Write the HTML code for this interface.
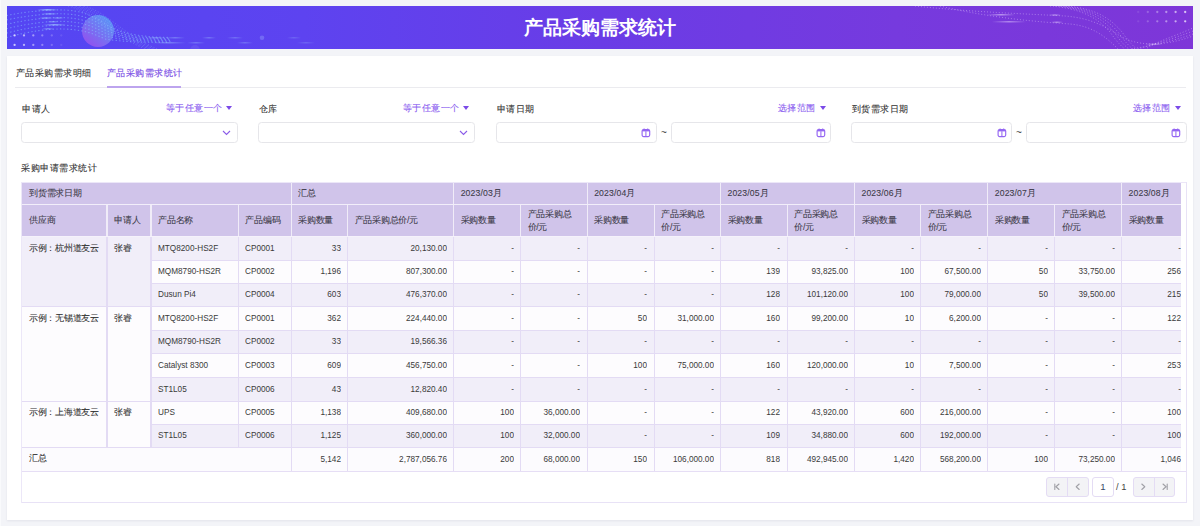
<!DOCTYPE html>
<html><head><meta charset="utf-8"><style>
*{box-sizing:border-box}
html,body{margin:0;padding:0}
body{width:1200px;height:526px;background:#f3f4f8;position:relative;overflow:hidden;font-family:"Liberation Sans", sans-serif;color:#333}
.t{position:absolute;height:20px;line-height:20px;white-space:nowrap;font-size:8.67px;letter-spacing:-0.3px;color:#333;-webkit-text-stroke:0.08px #333}
.th{position:absolute;height:20px;line-height:20px;white-space:nowrap;font-size:8.67px;letter-spacing:-0.25px;color:#3c3a48;-webkit-text-stroke:0.08px #3c3a48}
.n{position:absolute;height:20px;line-height:20px;white-space:nowrap;font-size:9.4px;color:#3a3a3a;transform:scaleX(0.875);transform-origin:left center}
.n.r{transform-origin:right center}
.l{position:absolute;height:20px;line-height:20px;white-space:nowrap;font-size:9.33px;letter-spacing:0.5px;color:#333;-webkit-text-stroke:0.1px #333}
.p{position:absolute;height:20px;line-height:20px;white-space:nowrap;font-size:9.33px;letter-spacing:0.5px;color:#8b5cf0;-webkit-text-stroke:0.1px #8b5cf0}
</style></head><body>
<div style="position:absolute;left:0.00px;top:0.00px;width:1.20px;height:526.00px;background:#f9fafc;"></div>
<div style="position:absolute;left:7px;top:6px;width:1186px;height:43px;background:linear-gradient(90deg,#5446f3 0%,#5d43f0 25%,#6a3ce6 50%,#763ade 75%,#7e36d8 100%);overflow:hidden">
<svg style="position:absolute;left:0;top:0" width="1186" height="43" viewBox="0 0 1186 43"><defs><linearGradient id="stk" x1="0" y1="0" x2="1" y2="0"><stop offset="0" stop-color="#a8d6ff" stop-opacity="0"/><stop offset="0.5" stop-color="#a8d6ff" stop-opacity="1"/><stop offset="1" stop-color="#a8d6ff" stop-opacity="0"/></linearGradient><linearGradient id="stk2" x1="0" y1="0" x2="1" y2="0"><stop offset="0" stop-color="#ead8ff" stop-opacity="0"/><stop offset="0.5" stop-color="#ead8ff" stop-opacity="1"/><stop offset="1" stop-color="#ead8ff" stop-opacity="0"/></linearGradient><linearGradient id="sph" x1="0.85" y1="0.1" x2="0.2" y2="0.9"><stop offset="0" stop-color="#5aaaf6"/><stop offset="1" stop-color="#a058ee"/></linearGradient></defs><g transform="translate(-7,-6)"><circle cx="98" cy="31" r="16" fill="url(#sph)" opacity="0.78"/><path d="M7 15.4 C 30 11, 50 9.5, 64 10.0 C 80 10.5, 92 15.0, 105 24 C 118 32.0, 135 37.0, 170 37.5" fill="none" stroke="#8cc6ff" stroke-opacity="0.5" stroke-width="1.2" stroke-linecap="round" stroke-dasharray="0.4 3.2"/><path d="M7 19.8 C 30 15, 50 13.3, 64 13.8 C 80 14.3, 92 18.5, 105 27 C 118 33.8, 135 38.1, 170 38.5" fill="none" stroke="#8cc6ff" stroke-opacity="0.5" stroke-width="1.2" stroke-linecap="round" stroke-dasharray="0.4 3.2"/><path d="M7 24.200000000000003 C 30 19, 50 17.1, 64 17.6 C 80 18.1, 92 22.0, 105 30 C 118 35.6, 135 39.2, 170 39.5" fill="none" stroke="#8cc6ff" stroke-opacity="0.5" stroke-width="1.2" stroke-linecap="round" stroke-dasharray="0.4 3.2"/><path d="M7 28.6 C 30 23, 50 20.9, 64 21.4 C 80 21.9, 92 25.5, 105 33 C 118 37.4, 135 40.3, 170 40.5" fill="none" stroke="#8cc6ff" stroke-opacity="0.5" stroke-width="1.2" stroke-linecap="round" stroke-dasharray="0.4 3.2"/><path d="M7 33.0 C 30 27, 50 24.7, 64 25.2 C 80 25.7, 92 29.0, 105 36 C 118 39.2, 135 41.4, 170 41.5" fill="none" stroke="#8cc6ff" stroke-opacity="0.5" stroke-width="1.2" stroke-linecap="round" stroke-dasharray="0.4 3.2"/><path d="M7 37.4 C 30 31, 50 28.5, 64 29.0 C 80 29.5, 92 32.5, 105 39 C 118 41.0, 135 42.5, 170 42.5" fill="none" stroke="#8cc6ff" stroke-opacity="0.5" stroke-width="1.2" stroke-linecap="round" stroke-dasharray="0.4 3.2"/><path d="M68 6 C 84 10, 100 22, 118 34 C 130 42, 140 47, 150 51" fill="none" stroke="#9cd0ff" stroke-opacity="0.4" stroke-width="0.8" stroke-dasharray="1 2"/><path d="M72 6 C 88 10, 103 22, 121 34 C 133 42, 143 47, 153 51" fill="none" stroke="#9cd0ff" stroke-opacity="0.4" stroke-width="0.8" stroke-dasharray="1 2"/><path d="M76 6 C 92 10, 106 22, 124 34 C 136 42, 146 47, 156 51" fill="none" stroke="#9cd0ff" stroke-opacity="0.4" stroke-width="0.8" stroke-dasharray="1 2"/><path d="M80 6 C 96 10, 109 22, 127 34 C 139 42, 149 47, 159 51" fill="none" stroke="#9cd0ff" stroke-opacity="0.4" stroke-width="0.8" stroke-dasharray="1 2"/><path d="M84 6 C 100 10, 112 22, 130 34 C 142 42, 152 47, 162 51" fill="none" stroke="#9cd0ff" stroke-opacity="0.4" stroke-width="0.8" stroke-dasharray="1 2"/><rect x="37" y="9.100000000000001" width="21" height="1.4" rx="0.7" fill="url(#stk)" opacity="0.72"/><rect x="41" y="13.200000000000001" width="17" height="1.4" rx="0.7" fill="url(#stk)" opacity="0.64"/><rect x="39" y="17.3" width="14" height="1.4" rx="0.7" fill="url(#stk)" opacity="0.56"/><rect x="52" y="17.3" width="12" height="1.4" rx="0.7" fill="url(#stk)" opacity="0.48"/><rect x="47" y="21.0" width="12" height="1.4" rx="0.7" fill="url(#stk)" opacity="0.48"/><rect x="43" y="24.1" width="23" height="1.4" rx="0.7" fill="url(#stk)" opacity="0.64"/><rect x="42" y="28.0" width="12" height="1.4" rx="0.7" fill="url(#stk)" opacity="0.48"/><rect x="147" y="37.0" width="18" height="1.4" rx="0.7" fill="url(#stk)" opacity="0.35"/><rect x="165" y="37.0" width="20" height="1.4" rx="0.7" fill="url(#stk)" opacity="0.35"/><rect x="152" y="42.0" width="34" height="1.4" rx="0.7" fill="url(#stk)" opacity="0.40"/><rect x="187" y="42.0" width="18" height="1.4" rx="0.7" fill="url(#stk)" opacity="0.32"/><rect x="202" y="37.0" width="14" height="1.4" rx="0.7" fill="url(#stk)" opacity="0.32"/><rect x="227" y="37.0" width="16" height="1.4" rx="0.7" fill="url(#stk)" opacity="0.29"/><rect x="237" y="42.0" width="16" height="1.4" rx="0.7" fill="url(#stk)" opacity="0.29"/><rect x="287" y="37.0" width="14" height="1.4" rx="0.7" fill="url(#stk)" opacity="0.22"/><rect x="297" y="42.0" width="18" height="1.4" rx="0.7" fill="url(#stk)" opacity="0.22"/><circle cx="262" cy="37.7" r="2.3" fill="#b8dcff" opacity="0.25"/><circle cx="195" cy="50" r="5" fill="#ffffff" opacity="0.07"/><circle cx="14.6" cy="35.4" r="1.15" fill="#fff" opacity="0.70"/><circle cx="24" cy="35.4" r="1.15" fill="#fff" opacity="0.58"/><circle cx="33.3" cy="35.4" r="1.15" fill="#fff" opacity="0.46"/><circle cx="42.3" cy="35.4" r="1.15" fill="#fff" opacity="0.34"/><circle cx="51.8" cy="35.4" r="1.15" fill="#fff" opacity="0.22"/><circle cx="61.3" cy="35.4" r="1.15" fill="#fff" opacity="0.10"/><circle cx="14.6" cy="44.9" r="1.15" fill="#fff" opacity="0.70"/><circle cx="24" cy="44.9" r="1.15" fill="#fff" opacity="0.58"/><circle cx="33.3" cy="44.9" r="1.15" fill="#fff" opacity="0.46"/><circle cx="42.3" cy="44.9" r="1.15" fill="#fff" opacity="0.34"/><circle cx="51.8" cy="44.9" r="1.15" fill="#fff" opacity="0.22"/><circle cx="61.3" cy="44.9" r="1.15" fill="#fff" opacity="0.10"/><circle cx="1138.2" cy="12" r="1.15" fill="#fff" opacity="0.10"/><circle cx="1147.8" cy="12" r="1.15" fill="#fff" opacity="0.22"/><circle cx="1157.3" cy="12" r="1.15" fill="#fff" opacity="0.34"/><circle cx="1166.3" cy="12" r="1.15" fill="#fff" opacity="0.46"/><circle cx="1175.6" cy="12" r="1.15" fill="#fff" opacity="0.58"/><circle cx="1185.2" cy="12" r="1.15" fill="#fff" opacity="0.70"/><circle cx="1138.2" cy="21.3" r="1.15" fill="#fff" opacity="0.10"/><circle cx="1147.8" cy="21.3" r="1.15" fill="#fff" opacity="0.22"/><circle cx="1157.3" cy="21.3" r="1.15" fill="#fff" opacity="0.34"/><circle cx="1166.3" cy="21.3" r="1.15" fill="#fff" opacity="0.46"/><circle cx="1175.6" cy="21.3" r="1.15" fill="#fff" opacity="0.58"/><circle cx="1185.2" cy="21.3" r="1.15" fill="#fff" opacity="0.70"/><path d="M915 6 C 970 12, 1030 14, 1065 16 C 1090 18, 1105 26, 1120 36 C 1135 45, 1160 48, 1193 36" fill="none" stroke="#ead8ff" stroke-opacity="0.5" stroke-width="0.8" stroke-dasharray="1 2"/><path d="M940 6 C 990 18, 1040 22, 1070 24 C 1092 26, 1105 36, 1118 49" fill="none" stroke="#ead8ff" stroke-opacity="0.5" stroke-width="0.8" stroke-dasharray="1 2"/><path d="M1050 6 C 1080 8, 1098 18, 1110 32 C 1117 42, 1122 47, 1126 50" fill="none" stroke="#ead8ff" stroke-opacity="0.5" stroke-width="0.8" stroke-dasharray="1 2"/><path d="M1055 6 C 1085 8, 1102 18, 1114 32 C 1121 42, 1126 47, 1130 50" fill="none" stroke="#ead8ff" stroke-opacity="0.5" stroke-width="0.8" stroke-dasharray="1 2"/><path d="M1060 6 C 1090 8, 1106 18, 1118 32 C 1125 42, 1130 47, 1134 50" fill="none" stroke="#ead8ff" stroke-opacity="0.5" stroke-width="0.8" stroke-dasharray="1 2"/><path d="M1065 6 C 1095 8, 1110 18, 1122 32 C 1129 42, 1134 47, 1138 50" fill="none" stroke="#ead8ff" stroke-opacity="0.5" stroke-width="0.8" stroke-dasharray="1 2"/><path d="M1125 50 C 1150 46, 1170 42, 1193 34" fill="none" stroke="#ead8ff" stroke-opacity="0.5" stroke-width="0.8" stroke-dasharray="1 2"/><path d="M1135 50 C 1150 45, 1170 40, 1193 31" fill="none" stroke="#ead8ff" stroke-opacity="0.5" stroke-width="0.8" stroke-dasharray="1 2"/><path d="M1145 50 C 1150 44, 1170 38, 1193 28" fill="none" stroke="#ead8ff" stroke-opacity="0.5" stroke-width="0.8" stroke-dasharray="1 2"/><rect x="987" y="14.0" width="28" height="1.4" rx="0.7" fill="url(#stk2)" opacity="0.56"/><rect x="992" y="21.0" width="34" height="1.4" rx="0.7" fill="url(#stk2)" opacity="0.48"/><rect x="1049" y="14.3" width="12" height="1.4" rx="0.7" fill="url(#stk2)" opacity="0.48"/><rect x="1051" y="21.6" width="12" height="1.4" rx="0.7" fill="url(#stk2)" opacity="0.48"/><rect x="1145" y="43.599999999999994" width="18" height="1.4" rx="0.7" fill="url(#stk2)" opacity="0.40"/></g></svg>
<div style="position:absolute;left:0;top:0;width:1186px;height:43px;text-align:center;line-height:43px;font-size:18.67px;font-weight:bold;color:#fff;letter-spacing:0px">产品采购需求统计</div>
</div>
<div style="position:absolute;left:7.00px;top:56.00px;width:1186.00px;height:464.00px;background:#fff;box-shadow:0 0.5px 2px rgba(40,40,80,0.08)"></div>
<div class="l" style="left:15.80px;top:62.50px">产品采购需求明细</div>
<div class="p" style="left:106.7px;top:62.5px;color:#7c4fe6;-webkit-text-stroke:0.15px #7c4fe6">产品采购需求统计</div>
<div style="position:absolute;left:15.00px;top:87.00px;width:1171.00px;height:1.00px;background:#ebebef;"></div>
<div style="position:absolute;left:107.00px;top:86.10px;width:74.00px;height:1.80px;background:#bda4ee;"></div>
<div class="l" style="left:22.00px;top:98.50px">申请人</div>
<div class="l" style="left:258.50px;top:98.50px">仓库</div>
<div class="l" style="left:496.50px;top:98.50px">申请日期</div>
<div class="l" style="left:851.50px;top:98.50px">到货需求日期</div>
<div class="p r" style="left:22.50px;top:97.60px;width:200px;text-align:right">等于任意一个</div>
<div class="p r" style="left:259.50px;top:97.60px;width:200px;text-align:right">等于任意一个</div>
<div class="p r" style="left:615.50px;top:97.60px;width:200px;text-align:right">选择范围</div>
<div class="p r" style="left:970.60px;top:97.60px;width:200px;text-align:right">选择范围</div>
<div style="position:absolute;left:226px;top:106px;width:0;height:0;border-left:3.5px solid transparent;border-right:3.5px solid transparent;border-top:4.5px solid #7b4ae8"></div>
<div style="position:absolute;left:463px;top:106px;width:0;height:0;border-left:3.5px solid transparent;border-right:3.5px solid transparent;border-top:4.5px solid #7b4ae8"></div>
<div style="position:absolute;left:819.5px;top:106px;width:0;height:0;border-left:3.5px solid transparent;border-right:3.5px solid transparent;border-top:4.5px solid #7b4ae8"></div>
<div style="position:absolute;left:1174.5px;top:106px;width:0;height:0;border-left:3.5px solid transparent;border-right:3.5px solid transparent;border-top:4.5px solid #7b4ae8"></div>
<div style="position:absolute;left:21px;top:122px;width:217px;height:20.7px;border:1px solid #e6e6ea;border-radius:3.5px;background:#fff"></div>
<svg style="position:absolute;left:222px;top:129.6px" width="9" height="6" viewBox="0 0 9 6"><path d="M1 1 L4.5 4.5 L8 1" fill="none" stroke="#8b5ce8" stroke-width="1.1"/></svg>
<div style="position:absolute;left:258px;top:122px;width:217px;height:20.7px;border:1px solid #e6e6ea;border-radius:3.5px;background:#fff"></div>
<svg style="position:absolute;left:459px;top:129.6px" width="9" height="6" viewBox="0 0 9 6"><path d="M1 1 L4.5 4.5 L8 1" fill="none" stroke="#8b5ce8" stroke-width="1.1"/></svg>
<div style="position:absolute;left:496px;top:122px;width:161px;height:20.7px;border:1px solid #e6e6ea;border-radius:3.5px;background:#fff"></div>
<svg style="position:absolute;left:641.4px;top:127.6px" width="10" height="10" viewBox="0 0 10 10"><rect x="1.1" y="1.6" width="7.6" height="7" rx="1.5" fill="none" stroke="#9466f2" stroke-width="1.15"/><rect x="1.3" y="2" width="7.2" height="1.4" fill="#9466f2"/><path d="M4.9 3.3 V8.6 M3.1 0.5 V2.2 M6.7 0.5 V2.2" stroke="#9466f2" stroke-width="1.05"/></svg>
<div style="position:absolute;left:671px;top:122px;width:160px;height:20.7px;border:1px solid #e6e6ea;border-radius:3.5px;background:#fff"></div>
<svg style="position:absolute;left:815.5px;top:127.6px" width="10" height="10" viewBox="0 0 10 10"><rect x="1.1" y="1.6" width="7.6" height="7" rx="1.5" fill="none" stroke="#9466f2" stroke-width="1.15"/><rect x="1.3" y="2" width="7.2" height="1.4" fill="#9466f2"/><path d="M4.9 3.3 V8.6 M3.1 0.5 V2.2 M6.7 0.5 V2.2" stroke="#9466f2" stroke-width="1.05"/></svg>
<div style="position:absolute;left:851px;top:122px;width:160.5px;height:20.7px;border:1px solid #e6e6ea;border-radius:3.5px;background:#fff"></div>
<svg style="position:absolute;left:996.5px;top:127.6px" width="10" height="10" viewBox="0 0 10 10"><rect x="1.1" y="1.6" width="7.6" height="7" rx="1.5" fill="none" stroke="#9466f2" stroke-width="1.15"/><rect x="1.3" y="2" width="7.2" height="1.4" fill="#9466f2"/><path d="M4.9 3.3 V8.6 M3.1 0.5 V2.2 M6.7 0.5 V2.2" stroke="#9466f2" stroke-width="1.05"/></svg>
<div style="position:absolute;left:1026px;top:122px;width:160.5px;height:20.7px;border:1px solid #e6e6ea;border-radius:3.5px;background:#fff"></div>
<svg style="position:absolute;left:1171px;top:127.6px" width="10" height="10" viewBox="0 0 10 10"><rect x="1.1" y="1.6" width="7.6" height="7" rx="1.5" fill="none" stroke="#9466f2" stroke-width="1.15"/><rect x="1.3" y="2" width="7.2" height="1.4" fill="#9466f2"/><path d="M4.9 3.3 V8.6 M3.1 0.5 V2.2 M6.7 0.5 V2.2" stroke="#9466f2" stroke-width="1.05"/></svg>
<div class="l" style="left:661px;top:122.5px;font-size:10px;color:#444;-webkit-text-stroke:0">~</div>
<div class="l" style="left:1016px;top:122.5px;font-size:10px;color:#444;-webkit-text-stroke:0">~</div>
<div class="l" style="left:21.00px;top:158.00px">采购申请需求统计</div>
<div style="position:absolute;left:22.00px;top:183.00px;width:1159.00px;height:53.00px;background:#d0c4ea;"></div>
<div style="position:absolute;left:22.00px;top:204.00px;width:1159.00px;height:1.00px;background:#f2eefa;"></div>
<div style="position:absolute;left:22.00px;top:236.00px;width:1159.00px;height:1.00px;background:#f5f2fb;"></div>
<div style="position:absolute;left:290.60px;top:183.00px;width:1.20px;height:21.00px;background:#f0ecf8;"></div>
<div style="position:absolute;left:453.10px;top:183.00px;width:1.20px;height:21.00px;background:#f0ecf8;"></div>
<div style="position:absolute;left:586.60px;top:183.00px;width:1.20px;height:21.00px;background:#f0ecf8;"></div>
<div style="position:absolute;left:719.90px;top:183.00px;width:1.20px;height:21.00px;background:#f0ecf8;"></div>
<div style="position:absolute;left:853.90px;top:183.00px;width:1.20px;height:21.00px;background:#f0ecf8;"></div>
<div style="position:absolute;left:987.20px;top:183.00px;width:1.20px;height:21.00px;background:#f0ecf8;"></div>
<div style="position:absolute;left:1121.00px;top:183.00px;width:1.20px;height:21.00px;background:#f0ecf8;"></div>
<div style="position:absolute;left:106.40px;top:205.00px;width:1.20px;height:31.00px;background:#f0ecf8;"></div>
<div style="position:absolute;left:150.40px;top:205.00px;width:1.20px;height:31.00px;background:#f0ecf8;"></div>
<div style="position:absolute;left:237.70px;top:205.00px;width:1.20px;height:31.00px;background:#f0ecf8;"></div>
<div style="position:absolute;left:290.60px;top:205.00px;width:1.20px;height:31.00px;background:#f0ecf8;"></div>
<div style="position:absolute;left:346.90px;top:205.00px;width:1.20px;height:31.00px;background:#f0ecf8;"></div>
<div style="position:absolute;left:453.10px;top:205.00px;width:1.20px;height:31.00px;background:#f0ecf8;"></div>
<div style="position:absolute;left:519.90px;top:205.00px;width:1.20px;height:31.00px;background:#f0ecf8;"></div>
<div style="position:absolute;left:586.60px;top:205.00px;width:1.20px;height:31.00px;background:#f0ecf8;"></div>
<div style="position:absolute;left:653.60px;top:205.00px;width:1.20px;height:31.00px;background:#f0ecf8;"></div>
<div style="position:absolute;left:719.90px;top:205.00px;width:1.20px;height:31.00px;background:#f0ecf8;"></div>
<div style="position:absolute;left:786.60px;top:205.00px;width:1.20px;height:31.00px;background:#f0ecf8;"></div>
<div style="position:absolute;left:853.90px;top:205.00px;width:1.20px;height:31.00px;background:#f0ecf8;"></div>
<div style="position:absolute;left:919.90px;top:205.00px;width:1.20px;height:31.00px;background:#f0ecf8;"></div>
<div style="position:absolute;left:987.20px;top:205.00px;width:1.20px;height:31.00px;background:#f0ecf8;"></div>
<div style="position:absolute;left:1054.00px;top:205.00px;width:1.20px;height:31.00px;background:#f0ecf8;"></div>
<div style="position:absolute;left:1121.00px;top:205.00px;width:1.20px;height:31.00px;background:#f0ecf8;"></div>
<div class="th" style="left:29.00px;top:183.00px">到货需求日期</div>
<div class="th" style="left:298.00px;top:183.00px">汇总</div>
<div class="th" style="left:460.70px;top:183.00px;letter-spacing:0.12px">2023/03月</div>
<div class="th" style="left:594.20px;top:183.00px;letter-spacing:0.12px">2023/04月</div>
<div class="th" style="left:727.50px;top:183.00px;letter-spacing:0.12px">2023/05月</div>
<div class="th" style="left:861.50px;top:183.00px;letter-spacing:0.12px">2023/06月</div>
<div class="th" style="left:994.80px;top:183.00px;letter-spacing:0.12px">2023/07月</div>
<div class="th" style="left:1128.60px;top:183.00px;letter-spacing:0.12px">2023/08月</div>
<div class="th" style="left:29.00px;top:210.00px">供应商</div>
<div class="th" style="left:114.00px;top:210.00px">申请人</div>
<div class="th" style="left:158.00px;top:210.00px">产品名称</div>
<div class="th" style="left:245.30px;top:210.00px">产品编码</div>
<div class="th" style="left:298.20px;top:210.00px">采购数量</div>
<div class="th" style="left:354.50px;top:210.00px">产品采购总价/元</div>
<div class="th" style="left:460.70px;top:210.00px">采购数量</div>
<div class="th" style="left:527.50px;top:203.50px">产品采购总</div>
<div class="th" style="left:527.50px;top:216.50px">价/元</div>
<div class="th" style="left:594.20px;top:210.00px">采购数量</div>
<div class="th" style="left:661.20px;top:203.50px">产品采购总</div>
<div class="th" style="left:661.20px;top:216.50px">价/元</div>
<div class="th" style="left:727.50px;top:210.00px">采购数量</div>
<div class="th" style="left:794.20px;top:203.50px">产品采购总</div>
<div class="th" style="left:794.20px;top:216.50px">价/元</div>
<div class="th" style="left:861.50px;top:210.00px">采购数量</div>
<div class="th" style="left:927.50px;top:203.50px">产品采购总</div>
<div class="th" style="left:927.50px;top:216.50px">价/元</div>
<div class="th" style="left:994.80px;top:210.00px">采购数量</div>
<div class="th" style="left:1061.60px;top:203.50px">产品采购总</div>
<div class="th" style="left:1061.60px;top:216.50px">价/元</div>
<div class="th" style="left:1128.60px;top:210.00px">采购数量</div>
<div style="position:absolute;left:22.00px;top:237.00px;width:1159.00px;height:23.00px;background:#f1eef9;"></div>
<div style="position:absolute;left:22.00px;top:261.00px;width:1159.00px;height:22.00px;background:#fdfcfe;"></div>
<div style="position:absolute;left:22.00px;top:284.00px;width:1159.00px;height:22.00px;background:#f1eef9;"></div>
<div style="position:absolute;left:22.00px;top:307.00px;width:1159.00px;height:23.00px;background:#fdfcfe;"></div>
<div style="position:absolute;left:22.00px;top:331.00px;width:1159.00px;height:22.00px;background:#f1eef9;"></div>
<div style="position:absolute;left:22.00px;top:354.00px;width:1159.00px;height:23.00px;background:#fdfcfe;"></div>
<div style="position:absolute;left:22.00px;top:378.00px;width:1159.00px;height:23.00px;background:#f1eef9;"></div>
<div style="position:absolute;left:22.00px;top:402.00px;width:1159.00px;height:22.00px;background:#fdfcfe;"></div>
<div style="position:absolute;left:22.00px;top:425.00px;width:1159.00px;height:22.00px;background:#f1eef9;"></div>
<div style="position:absolute;left:22.00px;top:448.00px;width:1159.00px;height:23.00px;background:#fcfbfe;"></div>
<div style="position:absolute;left:22.00px;top:237.00px;width:129.00px;height:69.00px;background:#f1eef9;"></div>
<div class="t" style="left:29.00px;top:237.70px">示例：杭州道友云</div>
<div class="t" style="left:114.00px;top:237.70px">张睿</div>
<div style="position:absolute;left:22.00px;top:307.00px;width:129.00px;height:94.00px;background:#fdfcfe;"></div>
<div class="t" style="left:29.00px;top:307.70px">示例：无锡道友云</div>
<div class="t" style="left:114.00px;top:307.70px">张睿</div>
<div style="position:absolute;left:22.00px;top:402.00px;width:129.00px;height:45.00px;background:#fdfcfe;"></div>
<div class="t" style="left:29.00px;top:402.20px">示例：上海道友云</div>
<div class="t" style="left:114.00px;top:402.20px">张睿</div>
<div style="position:absolute;left:151.00px;top:260.00px;width:1030.00px;height:1.00px;background:#e3dbf4;"></div>
<div style="position:absolute;left:151.00px;top:283.00px;width:1030.00px;height:1.00px;background:#e3dbf4;"></div>
<div style="position:absolute;left:22.00px;top:306.00px;width:1159.00px;height:1.00px;background:#e3dbf4;"></div>
<div style="position:absolute;left:151.00px;top:330.00px;width:1030.00px;height:1.00px;background:#e3dbf4;"></div>
<div style="position:absolute;left:151.00px;top:353.00px;width:1030.00px;height:1.00px;background:#e3dbf4;"></div>
<div style="position:absolute;left:151.00px;top:377.00px;width:1030.00px;height:1.00px;background:#e3dbf4;"></div>
<div style="position:absolute;left:22.00px;top:401.00px;width:1159.00px;height:1.00px;background:#e3dbf4;"></div>
<div style="position:absolute;left:151.00px;top:424.00px;width:1030.00px;height:1.00px;background:#e3dbf4;"></div>
<div style="position:absolute;left:22.00px;top:447.00px;width:1159.00px;height:1.00px;background:#e3dbf4;"></div>
<div style="position:absolute;left:22.00px;top:471.00px;width:1164.00px;height:1.00px;background:#e6def5;"></div>
<div style="position:absolute;left:106.40px;top:237.00px;width:1.20px;height:210.00px;background:#e3dbf4;"></div>
<div style="position:absolute;left:150.40px;top:237.00px;width:1.20px;height:210.00px;background:#e3dbf4;"></div>
<div style="position:absolute;left:237.70px;top:237.00px;width:1.20px;height:210.00px;background:#e3dbf4;"></div>
<div style="position:absolute;left:290.60px;top:237.00px;width:1.20px;height:234.00px;background:#e3dbf4;"></div>
<div style="position:absolute;left:346.90px;top:237.00px;width:1.20px;height:234.00px;background:#e3dbf4;"></div>
<div style="position:absolute;left:453.10px;top:237.00px;width:1.20px;height:234.00px;background:#e3dbf4;"></div>
<div style="position:absolute;left:519.90px;top:237.00px;width:1.20px;height:234.00px;background:#e3dbf4;"></div>
<div style="position:absolute;left:586.60px;top:237.00px;width:1.20px;height:234.00px;background:#e3dbf4;"></div>
<div style="position:absolute;left:653.60px;top:237.00px;width:1.20px;height:234.00px;background:#e3dbf4;"></div>
<div style="position:absolute;left:719.90px;top:237.00px;width:1.20px;height:234.00px;background:#e3dbf4;"></div>
<div style="position:absolute;left:786.60px;top:237.00px;width:1.20px;height:234.00px;background:#e3dbf4;"></div>
<div style="position:absolute;left:853.90px;top:237.00px;width:1.20px;height:234.00px;background:#e3dbf4;"></div>
<div style="position:absolute;left:919.90px;top:237.00px;width:1.20px;height:234.00px;background:#e3dbf4;"></div>
<div style="position:absolute;left:987.20px;top:237.00px;width:1.20px;height:234.00px;background:#e3dbf4;"></div>
<div style="position:absolute;left:1054.00px;top:237.00px;width:1.20px;height:234.00px;background:#e3dbf4;"></div>
<div style="position:absolute;left:1121.00px;top:237.00px;width:1.20px;height:234.00px;background:#e3dbf4;"></div>
<div class="n" style="left:158.00px;top:237.50px">MTQ8200-HS2F</div>
<div class="n" style="left:245.30px;top:237.50px">CP0001</div>
<div class="n r" style="left:140.50px;top:237.50px;width:200px;text-align:right">33</div>
<div class="n r" style="left:246.70px;top:237.50px;width:200px;text-align:right">20,130.00</div>
<div class="n r" style="left:313.50px;top:237.50px;width:200px;text-align:right">-</div>
<div class="n r" style="left:380.20px;top:237.50px;width:200px;text-align:right">-</div>
<div class="n r" style="left:447.20px;top:237.50px;width:200px;text-align:right">-</div>
<div class="n r" style="left:513.50px;top:237.50px;width:200px;text-align:right">-</div>
<div class="n r" style="left:580.20px;top:237.50px;width:200px;text-align:right">-</div>
<div class="n r" style="left:647.50px;top:237.50px;width:200px;text-align:right">-</div>
<div class="n r" style="left:713.50px;top:237.50px;width:200px;text-align:right">-</div>
<div class="n r" style="left:780.80px;top:237.50px;width:200px;text-align:right">-</div>
<div class="n r" style="left:847.60px;top:237.50px;width:200px;text-align:right">-</div>
<div class="n r" style="left:914.60px;top:237.50px;width:200px;text-align:right">-</div>
<div class="n r" style="left:981.40px;top:237.50px;width:200px;text-align:right">-</div>
<div class="n" style="left:158.00px;top:261.00px">MQM8790-HS2R</div>
<div class="n" style="left:245.30px;top:261.00px">CP0002</div>
<div class="n r" style="left:140.50px;top:261.00px;width:200px;text-align:right">1,196</div>
<div class="n r" style="left:246.70px;top:261.00px;width:200px;text-align:right">807,300.00</div>
<div class="n r" style="left:313.50px;top:261.00px;width:200px;text-align:right">-</div>
<div class="n r" style="left:380.20px;top:261.00px;width:200px;text-align:right">-</div>
<div class="n r" style="left:447.20px;top:261.00px;width:200px;text-align:right">-</div>
<div class="n r" style="left:513.50px;top:261.00px;width:200px;text-align:right">-</div>
<div class="n r" style="left:580.20px;top:261.00px;width:200px;text-align:right">139</div>
<div class="n r" style="left:647.50px;top:261.00px;width:200px;text-align:right">93,825.00</div>
<div class="n r" style="left:713.50px;top:261.00px;width:200px;text-align:right">100</div>
<div class="n r" style="left:780.80px;top:261.00px;width:200px;text-align:right">67,500.00</div>
<div class="n r" style="left:847.60px;top:261.00px;width:200px;text-align:right">50</div>
<div class="n r" style="left:914.60px;top:261.00px;width:200px;text-align:right">33,750.00</div>
<div class="n r" style="left:981.40px;top:261.00px;width:200px;text-align:right">256</div>
<div class="n" style="left:158.00px;top:284.00px">Dusun Pi4</div>
<div class="n" style="left:245.30px;top:284.00px">CP0004</div>
<div class="n r" style="left:140.50px;top:284.00px;width:200px;text-align:right">603</div>
<div class="n r" style="left:246.70px;top:284.00px;width:200px;text-align:right">476,370.00</div>
<div class="n r" style="left:313.50px;top:284.00px;width:200px;text-align:right">-</div>
<div class="n r" style="left:380.20px;top:284.00px;width:200px;text-align:right">-</div>
<div class="n r" style="left:447.20px;top:284.00px;width:200px;text-align:right">-</div>
<div class="n r" style="left:513.50px;top:284.00px;width:200px;text-align:right">-</div>
<div class="n r" style="left:580.20px;top:284.00px;width:200px;text-align:right">128</div>
<div class="n r" style="left:647.50px;top:284.00px;width:200px;text-align:right">101,120.00</div>
<div class="n r" style="left:713.50px;top:284.00px;width:200px;text-align:right">100</div>
<div class="n r" style="left:780.80px;top:284.00px;width:200px;text-align:right">79,000.00</div>
<div class="n r" style="left:847.60px;top:284.00px;width:200px;text-align:right">50</div>
<div class="n r" style="left:914.60px;top:284.00px;width:200px;text-align:right">39,500.00</div>
<div class="n r" style="left:981.40px;top:284.00px;width:200px;text-align:right">215</div>
<div class="n" style="left:158.00px;top:307.50px">MTQ8200-HS2F</div>
<div class="n" style="left:245.30px;top:307.50px">CP0001</div>
<div class="n r" style="left:140.50px;top:307.50px;width:200px;text-align:right">362</div>
<div class="n r" style="left:246.70px;top:307.50px;width:200px;text-align:right">224,440.00</div>
<div class="n r" style="left:313.50px;top:307.50px;width:200px;text-align:right">-</div>
<div class="n r" style="left:380.20px;top:307.50px;width:200px;text-align:right">-</div>
<div class="n r" style="left:447.20px;top:307.50px;width:200px;text-align:right">50</div>
<div class="n r" style="left:513.50px;top:307.50px;width:200px;text-align:right">31,000.00</div>
<div class="n r" style="left:580.20px;top:307.50px;width:200px;text-align:right">160</div>
<div class="n r" style="left:647.50px;top:307.50px;width:200px;text-align:right">99,200.00</div>
<div class="n r" style="left:713.50px;top:307.50px;width:200px;text-align:right">10</div>
<div class="n r" style="left:780.80px;top:307.50px;width:200px;text-align:right">6,200.00</div>
<div class="n r" style="left:847.60px;top:307.50px;width:200px;text-align:right">-</div>
<div class="n r" style="left:914.60px;top:307.50px;width:200px;text-align:right">-</div>
<div class="n r" style="left:981.40px;top:307.50px;width:200px;text-align:right">122</div>
<div class="n" style="left:158.00px;top:331.00px">MQM8790-HS2R</div>
<div class="n" style="left:245.30px;top:331.00px">CP0002</div>
<div class="n r" style="left:140.50px;top:331.00px;width:200px;text-align:right">33</div>
<div class="n r" style="left:246.70px;top:331.00px;width:200px;text-align:right">19,566.36</div>
<div class="n r" style="left:313.50px;top:331.00px;width:200px;text-align:right">-</div>
<div class="n r" style="left:380.20px;top:331.00px;width:200px;text-align:right">-</div>
<div class="n r" style="left:447.20px;top:331.00px;width:200px;text-align:right">-</div>
<div class="n r" style="left:513.50px;top:331.00px;width:200px;text-align:right">-</div>
<div class="n r" style="left:580.20px;top:331.00px;width:200px;text-align:right">-</div>
<div class="n r" style="left:647.50px;top:331.00px;width:200px;text-align:right">-</div>
<div class="n r" style="left:713.50px;top:331.00px;width:200px;text-align:right">-</div>
<div class="n r" style="left:780.80px;top:331.00px;width:200px;text-align:right">-</div>
<div class="n r" style="left:847.60px;top:331.00px;width:200px;text-align:right">-</div>
<div class="n r" style="left:914.60px;top:331.00px;width:200px;text-align:right">-</div>
<div class="n r" style="left:981.40px;top:331.00px;width:200px;text-align:right">-</div>
<div class="n" style="left:158.00px;top:354.50px">Catalyst 8300</div>
<div class="n" style="left:245.30px;top:354.50px">CP0003</div>
<div class="n r" style="left:140.50px;top:354.50px;width:200px;text-align:right">609</div>
<div class="n r" style="left:246.70px;top:354.50px;width:200px;text-align:right">456,750.00</div>
<div class="n r" style="left:313.50px;top:354.50px;width:200px;text-align:right">-</div>
<div class="n r" style="left:380.20px;top:354.50px;width:200px;text-align:right">-</div>
<div class="n r" style="left:447.20px;top:354.50px;width:200px;text-align:right">100</div>
<div class="n r" style="left:513.50px;top:354.50px;width:200px;text-align:right">75,000.00</div>
<div class="n r" style="left:580.20px;top:354.50px;width:200px;text-align:right">160</div>
<div class="n r" style="left:647.50px;top:354.50px;width:200px;text-align:right">120,000.00</div>
<div class="n r" style="left:713.50px;top:354.50px;width:200px;text-align:right">10</div>
<div class="n r" style="left:780.80px;top:354.50px;width:200px;text-align:right">7,500.00</div>
<div class="n r" style="left:847.60px;top:354.50px;width:200px;text-align:right">-</div>
<div class="n r" style="left:914.60px;top:354.50px;width:200px;text-align:right">-</div>
<div class="n r" style="left:981.40px;top:354.50px;width:200px;text-align:right">253</div>
<div class="n" style="left:158.00px;top:378.50px">ST1L05</div>
<div class="n" style="left:245.30px;top:378.50px">CP0006</div>
<div class="n r" style="left:140.50px;top:378.50px;width:200px;text-align:right">43</div>
<div class="n r" style="left:246.70px;top:378.50px;width:200px;text-align:right">12,820.40</div>
<div class="n r" style="left:313.50px;top:378.50px;width:200px;text-align:right">-</div>
<div class="n r" style="left:380.20px;top:378.50px;width:200px;text-align:right">-</div>
<div class="n r" style="left:447.20px;top:378.50px;width:200px;text-align:right">-</div>
<div class="n r" style="left:513.50px;top:378.50px;width:200px;text-align:right">-</div>
<div class="n r" style="left:580.20px;top:378.50px;width:200px;text-align:right">-</div>
<div class="n r" style="left:647.50px;top:378.50px;width:200px;text-align:right">-</div>
<div class="n r" style="left:713.50px;top:378.50px;width:200px;text-align:right">-</div>
<div class="n r" style="left:780.80px;top:378.50px;width:200px;text-align:right">-</div>
<div class="n r" style="left:847.60px;top:378.50px;width:200px;text-align:right">-</div>
<div class="n r" style="left:914.60px;top:378.50px;width:200px;text-align:right">-</div>
<div class="n r" style="left:981.40px;top:378.50px;width:200px;text-align:right">-</div>
<div class="n" style="left:158.00px;top:402.00px">UPS</div>
<div class="n" style="left:245.30px;top:402.00px">CP0005</div>
<div class="n r" style="left:140.50px;top:402.00px;width:200px;text-align:right">1,138</div>
<div class="n r" style="left:246.70px;top:402.00px;width:200px;text-align:right">409,680.00</div>
<div class="n r" style="left:313.50px;top:402.00px;width:200px;text-align:right">100</div>
<div class="n r" style="left:380.20px;top:402.00px;width:200px;text-align:right">36,000.00</div>
<div class="n r" style="left:447.20px;top:402.00px;width:200px;text-align:right">-</div>
<div class="n r" style="left:513.50px;top:402.00px;width:200px;text-align:right">-</div>
<div class="n r" style="left:580.20px;top:402.00px;width:200px;text-align:right">122</div>
<div class="n r" style="left:647.50px;top:402.00px;width:200px;text-align:right">43,920.00</div>
<div class="n r" style="left:713.50px;top:402.00px;width:200px;text-align:right">600</div>
<div class="n r" style="left:780.80px;top:402.00px;width:200px;text-align:right">216,000.00</div>
<div class="n r" style="left:847.60px;top:402.00px;width:200px;text-align:right">-</div>
<div class="n r" style="left:914.60px;top:402.00px;width:200px;text-align:right">-</div>
<div class="n r" style="left:981.40px;top:402.00px;width:200px;text-align:right">100</div>
<div class="n" style="left:158.00px;top:425.00px">ST1L05</div>
<div class="n" style="left:245.30px;top:425.00px">CP0006</div>
<div class="n r" style="left:140.50px;top:425.00px;width:200px;text-align:right">1,125</div>
<div class="n r" style="left:246.70px;top:425.00px;width:200px;text-align:right">360,000.00</div>
<div class="n r" style="left:313.50px;top:425.00px;width:200px;text-align:right">100</div>
<div class="n r" style="left:380.20px;top:425.00px;width:200px;text-align:right">32,000.00</div>
<div class="n r" style="left:447.20px;top:425.00px;width:200px;text-align:right">-</div>
<div class="n r" style="left:513.50px;top:425.00px;width:200px;text-align:right">-</div>
<div class="n r" style="left:580.20px;top:425.00px;width:200px;text-align:right">109</div>
<div class="n r" style="left:647.50px;top:425.00px;width:200px;text-align:right">34,880.00</div>
<div class="n r" style="left:713.50px;top:425.00px;width:200px;text-align:right">600</div>
<div class="n r" style="left:780.80px;top:425.00px;width:200px;text-align:right">192,000.00</div>
<div class="n r" style="left:847.60px;top:425.00px;width:200px;text-align:right">-</div>
<div class="n r" style="left:914.60px;top:425.00px;width:200px;text-align:right">-</div>
<div class="n r" style="left:981.40px;top:425.00px;width:200px;text-align:right">100</div>
<div class="t" style="left:29.00px;top:448.30px">汇总</div>
<div class="n r" style="left:140.50px;top:448.50px;width:200px;text-align:right">5,142</div>
<div class="n r" style="left:246.70px;top:448.50px;width:200px;text-align:right">2,787,056.76</div>
<div class="n r" style="left:313.50px;top:448.50px;width:200px;text-align:right">200</div>
<div class="n r" style="left:380.20px;top:448.50px;width:200px;text-align:right">68,000.00</div>
<div class="n r" style="left:447.20px;top:448.50px;width:200px;text-align:right">150</div>
<div class="n r" style="left:513.50px;top:448.50px;width:200px;text-align:right">106,000.00</div>
<div class="n r" style="left:580.20px;top:448.50px;width:200px;text-align:right">818</div>
<div class="n r" style="left:647.50px;top:448.50px;width:200px;text-align:right">492,945.00</div>
<div class="n r" style="left:713.50px;top:448.50px;width:200px;text-align:right">1,420</div>
<div class="n r" style="left:780.80px;top:448.50px;width:200px;text-align:right">568,200.00</div>
<div class="n r" style="left:847.60px;top:448.50px;width:200px;text-align:right">100</div>
<div class="n r" style="left:914.60px;top:448.50px;width:200px;text-align:right">73,250.00</div>
<div class="n r" style="left:981.40px;top:448.50px;width:200px;text-align:right">1,046</div>
<div style="position:absolute;left:1181.00px;top:183.00px;width:5.00px;height:288.00px;background:#fff;"></div>
<div style="position:absolute;left:21.00px;top:182.00px;width:1166.00px;height:1.00px;background:#ece7f8;"></div>
<div style="position:absolute;left:21.00px;top:502.00px;width:1166.00px;height:1.00px;background:#e8e2f6;"></div>
<div style="position:absolute;left:21.00px;top:182.00px;width:1.00px;height:321.00px;background:#ece7f8;"></div>
<div style="position:absolute;left:1186.00px;top:182.00px;width:1.00px;height:321.00px;background:#e8e2f6;"></div>
<div style="position:absolute;left:1046.3px;top:477px;width:42.5px;height:20px;border:1px solid #e4dcf4;border-radius:3px;background:#f3f3f6"></div>
<div style="position:absolute;left:1067.10px;top:478.00px;width:1.00px;height:18.00px;background:#e4dcf4;"></div>
<div style="position:absolute;left:1133.3px;top:477px;width:41.799999999999955px;height:20px;border:1px solid #e4dcf4;border-radius:3px;background:#f3f3f6"></div>
<div style="position:absolute;left:1154.00px;top:478.00px;width:1.00px;height:18.00px;background:#e4dcf4;"></div>
<div style="position:absolute;left:1091.8px;top:477px;width:22px;height:20px;border:1px solid #e4dcf4;border-radius:3px;background:#fff"></div>
<div class="l" style="left:1091.8px;top:477px;width:22px;text-align:center;font-size:9.6px;letter-spacing:0;color:#3b4a66;-webkit-text-stroke:0;font-weight:normal">1</div>
<div class="l" style="left:1116px;top:477px;font-size:9.33px;letter-spacing:0;color:#444;-webkit-text-stroke:0">/ 1</div>
<svg style="position:absolute;left:1040px;top:472px" width="150" height="30" viewBox="1040 472 150 30"><g fill="none" stroke="#a0a0a6" stroke-width="1.1" stroke-linecap="round" stroke-linejoin="round"><path d="M1054.8 484 V489.5 M1059 484 L1056 486.75 L1059 489.5"/><path d="M1079.2 484 L1076.2 486.75 L1079.2 489.5"/><path d="M1141.8 484 L1144.8 486.75 L1141.8 489.5"/><path d="M1163 484 L1166 486.75 L1163 489.5 M1167.2 484 V489.5"/></g></svg>
</body></html>
